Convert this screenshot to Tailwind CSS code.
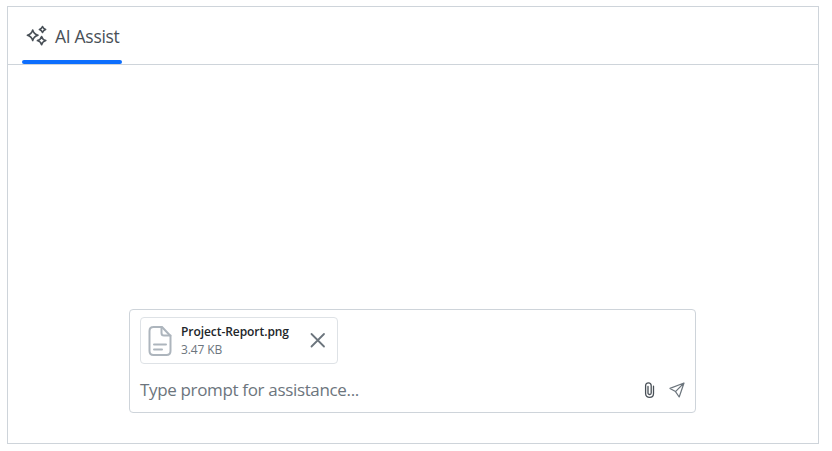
<!DOCTYPE html>
<html lang="en">
<head>
<meta charset="utf-8">
<title>AI Assist</title>
<script src="https://cdn.jsdelivr.net/npm/@tailwindcss/browser@4"></script>
</head>
<body class="bg-white font-['Open_Sans','Noto_Sans',sans-serif] antialiased">
<main class="mt-[6px] ml-[7px] flex h-[438px] w-[812px] flex-col border border-[#ced4da]">
  <header class="flex h-[58px] shrink-0 border-b border-[#ced4da] pl-[14px]">
    <div class="flex h-[57px] w-[100px] flex-col justify-between">
      <div class="flex h-[53px] items-center pt-[6px] pl-1">
        <svg class="-mt-[2px] h-[22px] w-[22px] shrink-0" viewBox="0 0 22 22" fill="none" stroke="#495057" stroke-width="1.6" stroke-linejoin="round">
          <path d="M6.7 5Q7.8 9.2 12 10.3Q7.8 11.4 6.7 15.6Q5.6 11.4 1.4 10.3Q5.6 9.2 6.7 5Z"/>
          <path d="M16.5 1.5Q17.3 3.8 19.6 4.5Q17.3 5.2 16.5 7.5Q15.7 5.2 13.4 4.5Q15.7 3.8 16.5 1.5Z"/>
          <path d="M15.6 11.5Q16.5 14.7 19.8 15.6Q16.5 16.5 15.6 19.7Q14.7 16.5 11.4 15.6Q14.7 14.7 15.6 11.5Z"/>
        </svg>
        <span class="-mt-[2px] ml-[7px] whitespace-nowrap text-[17.5px] leading-6 tracking-[-0.3px] text-[#495057]">AI Assist</span>
      </div>
      <div class="h-1 w-[100px] rounded-full bg-[#0d6efd]"></div>
    </div>
  </header>
  <section class="flex flex-1 items-end pb-[30px] pl-[121px]">
    <div class="flex h-[104px] w-[567px] flex-col rounded border border-[#ced4da] pt-[7px] pl-[10px]">
      <div class="flex h-[47px] w-[198px] shrink-0 rounded border border-[#dee2e6]">
        <svg class="mt-2 ml-[7px] h-[30px] w-6 shrink-0" viewBox="0 0 24 30" fill="none" stroke="#adb5bd" stroke-width="2" stroke-linecap="round" stroke-linejoin="round">
          <path d="M5 1H14L22.5 10V25Q22.5 29 18.5 29H5.5Q1.5 29 1.5 25V5Q1.5 1 5.5 1Z"/>
          <path d="M13.5 1V7Q13.5 9.5 16 9.5H22.5M6 18.5H18M6 23.5H14"/>
        </svg>
        <div class="ml-[9px] w-[120px] pt-[5px]">
          <div class="whitespace-nowrap text-[12px] leading-[18px] font-semibold tracking-[-0.06px] text-[#212529]">Project-Report.png</div>
          <div class="whitespace-nowrap text-[12px] leading-[18px] tracking-[-0.1px] text-[#6c757d]">3.47 KB</div>
        </div>
        <svg class="mt-[14px] ml-[9px] h-4 w-4 shrink-0" viewBox="0 0 16 16" fill="none" stroke="#6c757d" stroke-width="1.8" stroke-linecap="round"><path d="M1.5 2L14 14.5M14 2L1.5 14.5"/></svg>
      </div>
      <div class="flex h-[48px] items-center pt-1">
        <span class="w-[503px] whitespace-nowrap text-[17px] leading-6 tracking-[-0.34px] text-[#6c757d]">Type prompt for assistance...</span>
        <svg class="h-[18px] w-[12px] shrink-0" viewBox="0 0 12 18" fill="none" stroke="#495057" stroke-width="1.3" stroke-linecap="round"><path d="M10.5 5.2V12.5C10.5 17.7 2.6 17.7 2.6 12.5V4.8C2.6 .8 8.2 .8 8.2 4.8V12C8.2 14 5 14 5 12V5.5"/></svg>
        <svg class="ml-[14px] h-4 w-4 shrink-0" viewBox="0 0 16 16" fill="none" stroke="#6c757d" stroke-width="1.2" stroke-linejoin="round"><path d="M15 1L10.2 15L6.5 9.6L1 6.4ZM15 1L6.5 9.6"/></svg>
      </div>
    </div>
  </section>
</main>
</body>
</html>
